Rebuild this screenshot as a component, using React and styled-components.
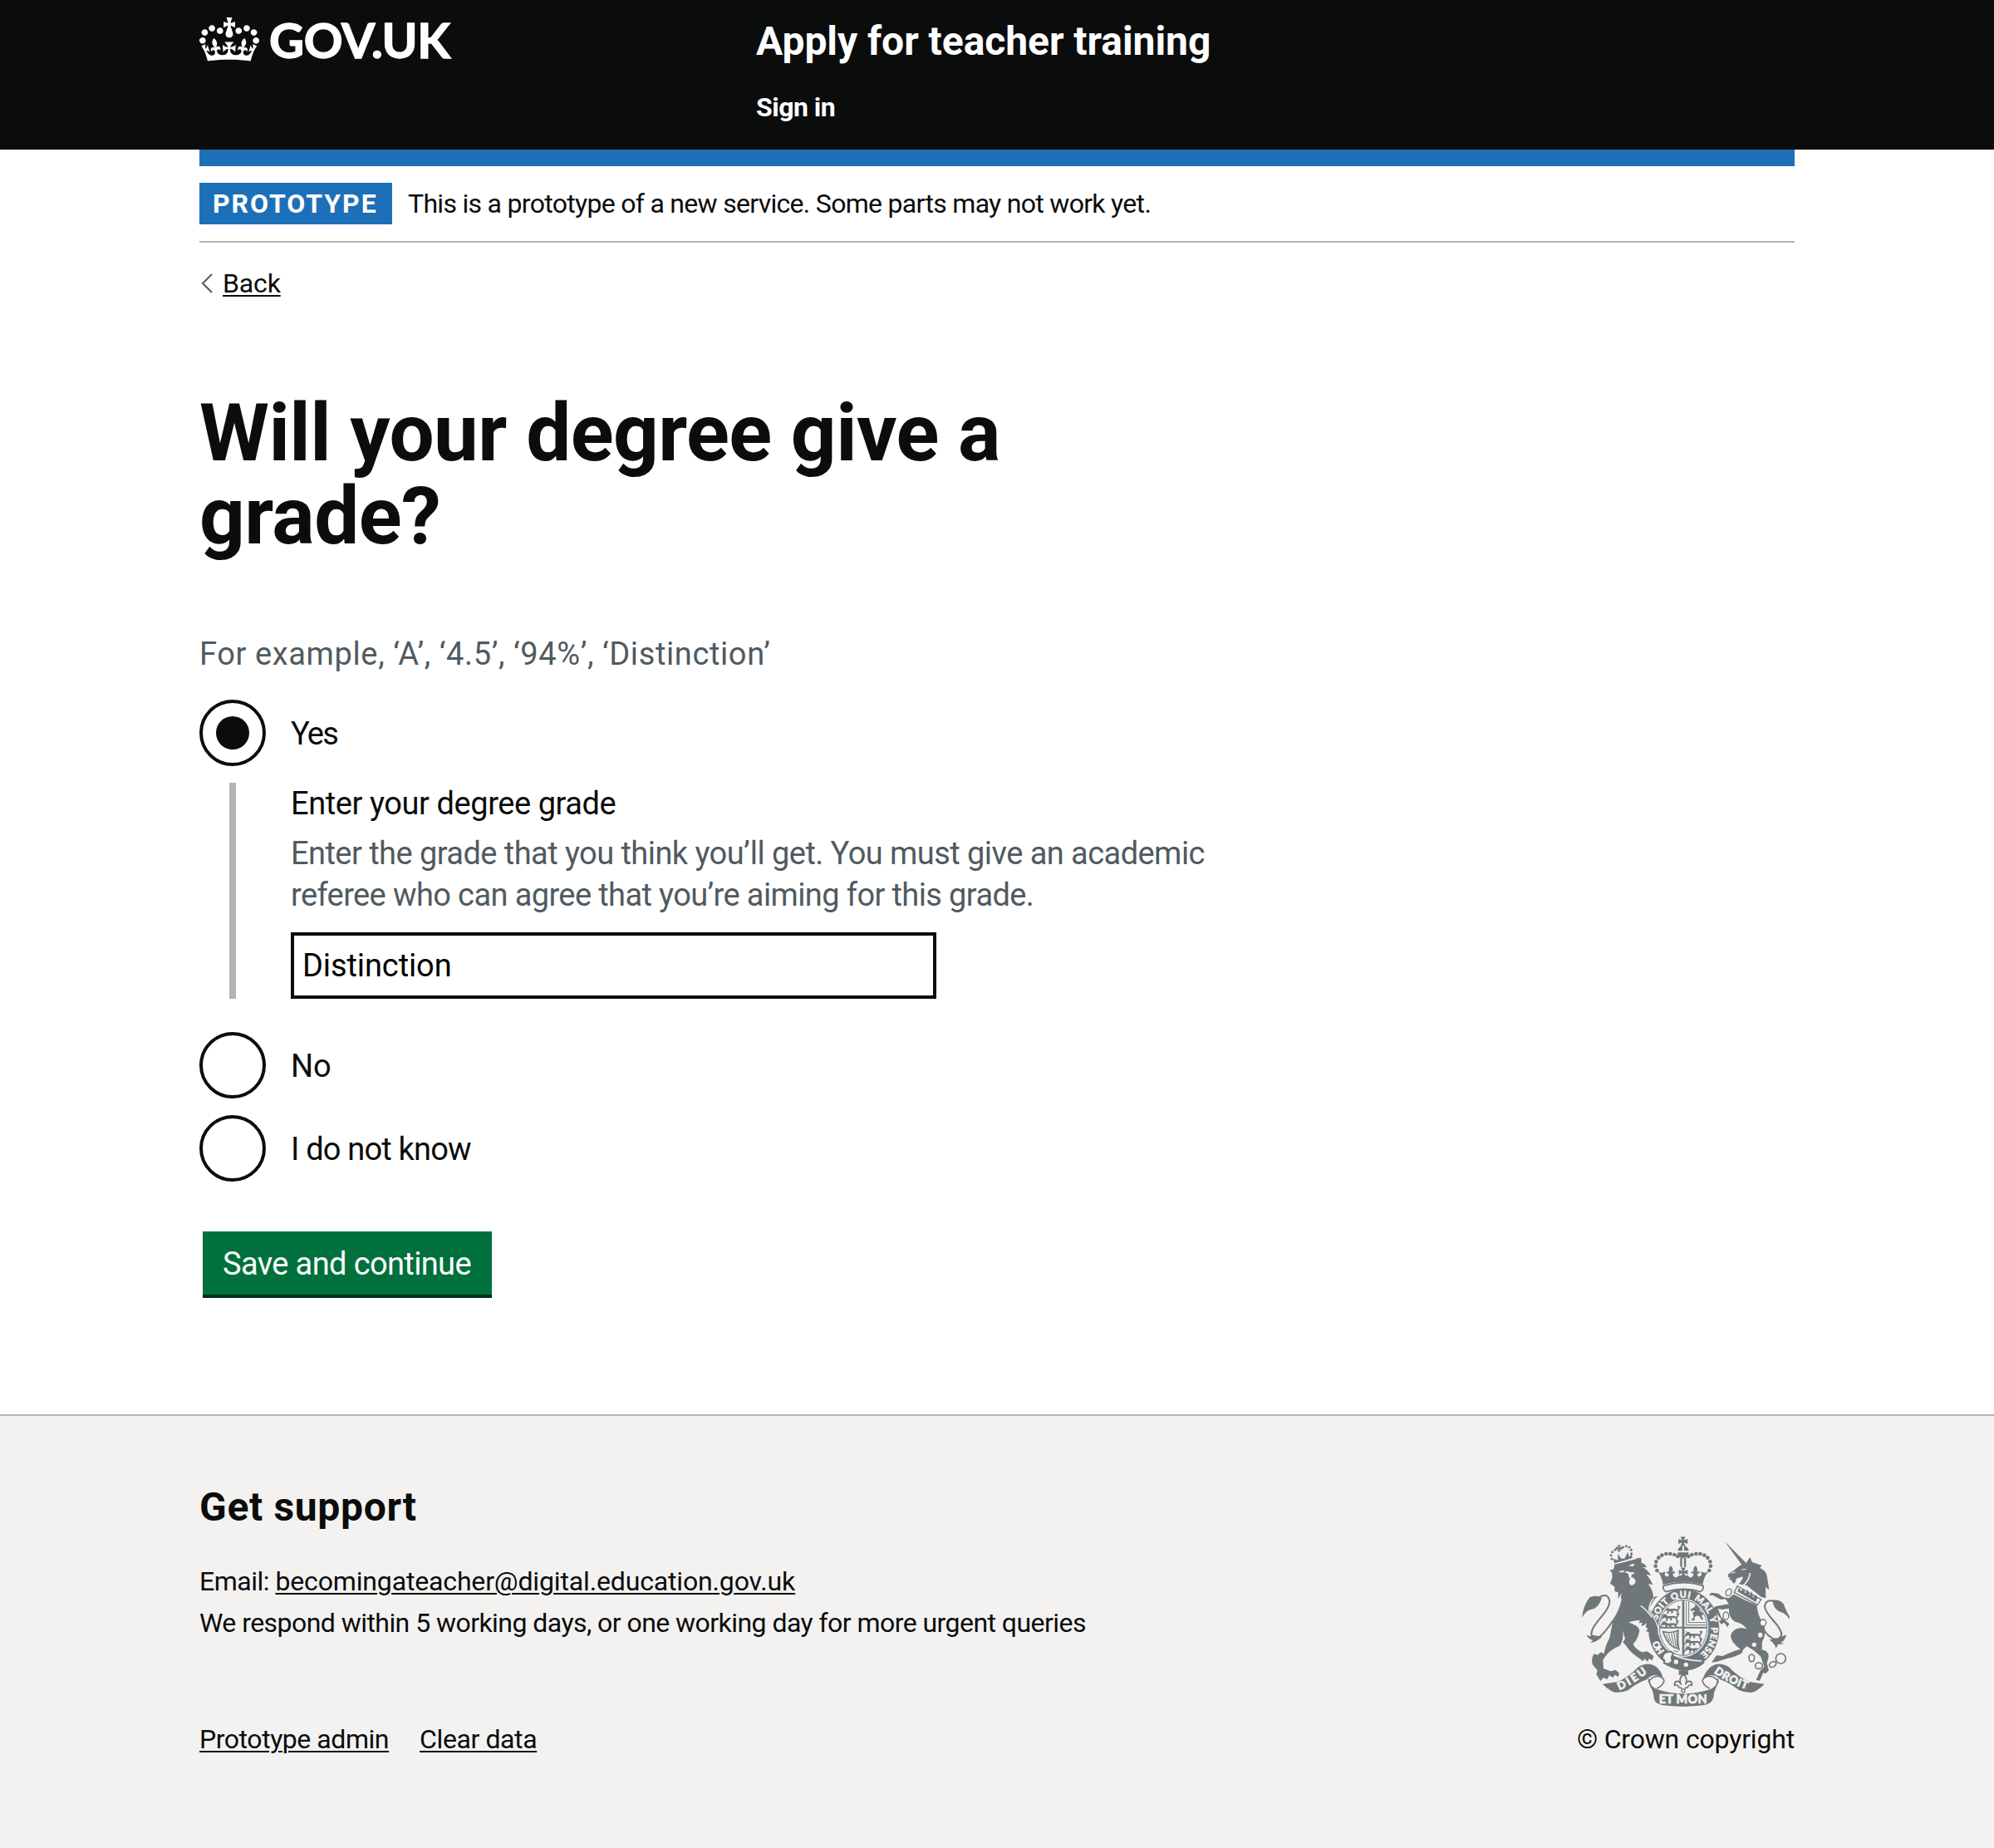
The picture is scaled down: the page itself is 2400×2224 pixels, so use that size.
import React, { useState } from "react";
import styled, { createGlobalStyle } from "styled-components";

const ink = "#0b0c0c";
const secondary = "#505a5f";
const rule = "#b1b4b6";
const blue = "#1d70b8";
const paper = "#f3f2f1";
const crest = "#6f777b";

const GlobalStyle = createGlobalStyle`
  body {
    margin: 0;
    background: #fff;
    color: ${ink};
    font-family: Roboto, "Liberation Sans", sans-serif;
    -webkit-font-smoothing: antialiased;
  }
  *, *::before, *::after { box-sizing: border-box; }
`;

const Page = styled.div`
  display: flex;
  flex-direction: column;
  min-height: 2224px;
`;

const Container = styled.div`
  width: 1920px;
  margin: 0 auto;
`;

/* Header */
const Header = styled.header`
  height: 180px;
  background: ${ink};
  color: #fff;
`;

const HeaderRow = styled(Container)`
  display: grid;
  grid-template-columns: 670px 1fr;
`;

const LogoLink = styled.a`
  display: flex;
  gap: 12px;
  padding-top: 21px;
  color: #fff;
  text-decoration: none;
`;

const LogoText = styled.span`
  margin-top: 2px;
  font: 700 58px/50px Lato, "Liberation Sans", sans-serif;
  letter-spacing: -0.3px;
  -webkit-text-stroke: 1.4px #fff;
`;

const ServiceColumn = styled.div`
  display: flex;
  flex-direction: column;
  align-items: flex-start;
  gap: 29px;
  padding-top: 20px;
`;

const ServiceName = styled.a`
  font-size: 48px;
  line-height: 60px;
  font-weight: 700;
  letter-spacing: -0.05px;
`;

const NavLink = styled.a`
  font-size: 32px;
  line-height: 40px;
  font-weight: 700;
  letter-spacing: -0.5px;
`;

/* Phase banner */
const PhaseBanner = styled(Container)`
  display: flex;
  gap: 19px;
  padding: 20px 0;
  border-top: 20px solid ${blue};
  border-bottom: 2px solid ${rule};
`;

const Tag = styled.strong`
  width: 232px;
  padding-left: 16px;
  background: ${blue};
  color: #fff;
  font-size: 32px;
  line-height: 50px;
  letter-spacing: 1.95px;
  white-space: nowrap;
`;

const Copy = styled.p`
  margin: 0;
  font-size: 32px;
  line-height: 50px;
  letter-spacing: ${(p) => p.$track || 0}px;
  white-space: nowrap;
`;

const Link = styled.a`
  color: ${ink};
  font-size: 32px;
  line-height: 50px;
  letter-spacing: ${(p) => p.$track || 0}px;
  text-decoration: underline;
  text-decoration-thickness: 2px;
  text-underline-offset: 3px;
`;

const BackRow = styled.div`
  display: flex;
  align-items: center;
  gap: 12px;
  margin-top: 24px;
  padding-left: 2px;
`;

/* Form */
const Main = styled.main`
  width: 1280px;
`;

const Heading = styled.h1`
  width: 1060px;
  margin: 105px 0 91px;
  font-size: 96px;
  line-height: 100px;
  font-weight: 700;
  letter-spacing: -0.55px;
`;

const Hint = styled.div`
  color: ${secondary};
  font-size: 38px;
  line-height: 50px;
  letter-spacing: ${(p) => p.$track || 0}px;
  white-space: nowrap;
`;

const Radios = styled.div`
  display: flex;
  flex-direction: column;
  gap: 20px;
  margin: 30px 0 60px;
`;

const RadioRow = styled.label`
  display: flex;
  align-items: center;
  gap: 30px;
  height: 80px;
`;

const RadioInput = styled.input`
  appearance: none;
  display: grid;
  place-items: center;
  width: 80px;
  height: 80px;
  margin: 0;
  border: 4px solid ${ink};
  border-radius: 50%;
  background: #fff;
  &:checked::before {
    content: "";
    width: 40px;
    height: 40px;
    border-radius: 50%;
    background: ${ink};
  }
`;

const RadioLabel = styled.span`
  padding-top: 2px;
  font-size: 38px;
  line-height: 50px;
  letter-spacing: ${(p) => p.$track || 0}px;
`;

const Conditional = styled.div`
  margin: 0 0 20px 36px;
  padding-left: 66px;
  border-left: 8px solid ${rule};
`;

const FieldLabel = styled.label`
  display: block;
  margin-bottom: 10px;
  font-size: 38px;
  line-height: 50px;
  letter-spacing: -0.42px;
`;

const TextInput = styled.input`
  display: block;
  width: 777px;
  height: 80px;
  margin: 20px 0 0;
  padding: 0 10px;
  border: 4px solid ${ink};
  border-radius: 0;
  background: #fff;
  color: #000;
  font: 38px/50px Roboto, "Liberation Sans", sans-serif;
  letter-spacing: -0.1px;
  outline: none;
`;

const Button = styled.button`
  display: block;
  width: 348px;
  height: 76px;
  margin: 0 0 144px 4px;
  padding: 2px 0 0 24px;
  border: 0;
  background: #00703c;
  box-shadow: 0 4px 0 #002d18;
  color: #fff;
  font: 38px/50px Roboto, "Liberation Sans", sans-serif;
  letter-spacing: -0.62px;
  text-align: left;
  white-space: nowrap;
`;

/* Footer */
const Footer = styled.footer`
  flex: 1;
  border-top: 2px solid ${rule};
  background: ${paper};
`;

const FooterRow = styled(Container)`
  display: flex;
  justify-content: space-between;
  align-items: flex-end;
  padding-top: 80px;
`;

const FooterHeading = styled.h2`
  margin: 0 0 34px;
  font-size: 48px;
  line-height: 60px;
  font-weight: 700;
  letter-spacing: 0.66px;
`;

const FooterLinks = styled.nav`
  display: flex;
  gap: 37px;
  margin-top: 90px;
`;

const Copyright = styled.div`
  display: flex;
  flex-direction: column;
  align-items: flex-end;
  gap: 14px;
`;

const CrestSvg = styled.svg`
  display: block;
  margin-right: 6px;
`;

function Crown() {
  return (
    <svg width="72" height="53" viewBox="0 0 132 97" aria-hidden="true">
      <path
        fill="currentColor"
        fillRule="evenodd"
        d="M25 30.2c3.5 1.5 7.7-.2 9.1-3.7 1.5-3.6-.2-7.8-3.9-9.2-3.6-1.4-7.6.3-9.1 3.9-1.4 3.5.3 7.5 3.9 9zM9 39.5c3.6 1.5 7.8-.2 9.2-3.7 1.5-3.6-.2-7.8-3.9-9.1-3.6-1.5-7.6.2-9.1 3.8-1.4 3.5.3 7.5 3.8 9zM4.4 57.2c3.5 1.5 7.7-.2 9.1-3.8 1.5-3.6-.2-7.7-3.9-9.1-3.5-1.5-7.6.3-9.1 3.8-1.4 3.5.3 7.6 3.9 9.1zm38.3-21.4c3.5 1.5 7.7-.2 9.1-3.8 1.5-3.6-.2-7.7-3.9-9.1-3.6-1.5-7.6.3-9.1 3.8-1.3 3.6.4 7.7 3.9 9.1zm64.4-5.6c-3.6 1.5-7.8-.2-9.1-3.7-1.5-3.6.2-7.8 3.8-9.2 3.6-1.4 7.7.3 9.2 3.9 1.3 3.5-.4 7.5-3.9 9zm15.9 9.3c-3.6 1.5-7.7-.2-9.1-3.7-1.5-3.6.2-7.8 3.7-9.1 3.6-1.5 7.7.2 9.2 3.8 1.5 3.5-.3 7.5-3.8 9zm4.7 17.7c-3.6 1.5-7.8-.2-9.2-3.8-1.5-3.6.2-7.7 3.9-9.1 3.6-1.5 7.7.3 9.2 3.8 1.3 3.5-.4 7.6-3.9 9.1zM89.3 35.8c-3.6 1.5-7.8-.2-9.2-3.8-1.4-3.6.2-7.7 3.9-9.1 3.6-1.5 7.7.3 9.2 3.8 1.4 3.6-.3 7.7-3.9 9.1zM69.7 17.7l8.9 4.7V9.3l-8.9 2.8c-.2-.3-.5-.6-.9-.9L72.4 0H59.6l3.5 11.2c-.3.3-.6.5-.9.9l-8.8-2.8v13.1l8.8-4.7c.3.3.6.7.9.9l-5 15.4v.1c-.2.8-.4 1.6-.4 2.4 0 4.1 3.1 7.5 7 8.1h.2c.3 0 .7.1 1 .1.4 0 .7 0 1-.1h.2c4-.6 7.1-4.1 7.1-8.1 0-.8-.1-1.7-.4-2.4V34l-5.1-15.4c.4-.2.7-.6 1-.9zM66 92.8c16.9 0 32.8 1.1 47.1 3.2 4-16.9 8.9-26.7 14-33.5l-9.6-3.4c1 4.9 1.1 7.2 0 10.2-1.5-1.4-3-4.3-4.2-8.7L108.6 76c2.8-2 5-3.2 7.5-3.3-4.4 9.4-10 11.9-13.6 11.2-4.3-.8-6.3-4.6-5.6-7.9 1-4.7 5.7-5.9 8-.5 4.3-8.7-3-11.4-7.6-8.8 7.1-7.2 7.9-13.5 2.1-21.1-8 6.1-8.1 12.3-4.5 20.8-4.7-5.4-12.1-2.5-9.5 6.2 3.4-5.2 7.9-2 7.2 3.1-.6 4.3-6.4 7.8-13.5 7.2-10.3-.9-10.9-8-11.2-13.8 2.5-.5 7.1 1.8 11 7.3L80.2 60c-4.1 4.4-8 5.3-12.3 5.4 1.4-4.4 8-11.6 8-11.6H55.5s6.4 7.2 7.9 11.6c-4.2-.1-8-1-12.3-5.4l1.4 16.4c3.9-5.5 8.5-7.7 10.9-7.3-.3 5.8-.9 12.8-11.1 13.8-7.2.6-12.9-2.9-13.5-7.2-.7-5 3.8-8.3 7.1-3.1 2.7-8.7-4.6-11.6-9.4-6.2 3.7-8.5 3.6-14.7-4.6-20.8-5.8 7.6-5 13.9 2.2 21.1-4.7-2.6-11.9.1-7.7 8.8 2.3-5.5 7.1-4.2 8.1.5.7 3.3-1.3 7.1-5.7 7.9-3.5.7-9-1.8-13.5-11.2 2.5.1 4.7 1.3 7.5 3.3l-4.7-15.4c-1.2 4.4-2.7 7.2-4.3 8.7-1.1-3-.9-5.3 0-10.2l-9.5 3.4c5 6.9 9.9 16.7 14 33.5 14.8-2.1 30.8-3.2 47.7-3.2z"
      />
    </svg>
  );
}

const crownPearls = [
  [343, 181], [338, 165], [340, 149], [349, 135],
  [361, 126], [376, 121], [391, 121], [406, 124], [418, 130],
];

const lionCrownPearls = [
  [180, 139], [177, 126], [182, 114], [192, 106], [220, 97], [232, 93], [243, 97], [250, 107], [251, 120],
];

/* word, centre along the garter in percent, drawn length */
const garterWords = [
  ["HO", 15.4, 46], ["SOIT", 35.6, 78], ["QUI", 48.4, 66], ["MAL", 61.2, 74], ["Y", 70.3, 20], ["PENSE", 82.2, 108],
];

/* One walking lion of the English quarters, about 70 units wide. */
function Passant({ x, y }) {
  return (
    <g transform={`translate(${x} ${y})`}>
      <path d="M0 4l8-5 7 4 5 4 22-1 8 3 3-6-4-5 6-3 4 6-3 9-4 4 4 8-8 2 2-5-7-6-10 1 2 7-9 2 2-6-5-3-6 5 2 5-8 1 3-9-5-4-8 3-6 6-3-3 6-6z" />
      <path d="M1 11l5 1M54 2l8-3M3-3l-4 3" stroke={crest} strokeWidth="2.5" />
    </g>
  );
}

function Fleur({ x, y, s = 1 }) {
  return (
    <path
      transform={`translate(${x} ${y}) scale(${s})`}
      d="M0-20c8 8 10 15 4 24 5-7 13-4 11 4-4-3-8 0-8 5l4 8h-22l4-8c0-5-4-8-8-5-2-8 6-11 11-4-6-9-4-16 4-24z"
    />
  );
}

function Pattee({ x, y, s = 1 }) {
  return (
    <path
      transform={`translate(${x} ${y}) scale(${s})`}
      d="M-9-17H9L3-4 17-9V9L3 4 9 17H-9L-3 4-17 9V-9L-3-4z"
    />
  );
}

function RoyalArms() {
  return (
    <CrestSvg width="250" height="205" viewBox="72 58 750 615" fill={crest} role="img">
      <defs>
        <path id="garter" d="M440 505A99 113 0 0 1 440 279A99 113 0 0 1 440 505" />
        <path id="motto-left" d="M207 613Q262 592 330 532" />
        <path id="motto-right" d="M548 550Q600 590 700 622" />
        <clipPath id="shield"><ellipse cx="438" cy="388" rx="84" ry="98" /></clipPath>
      </defs>

      {/* Garter and shield */}
      <ellipse cx="440" cy="392" rx="128" ry="144" />
      <ellipse cx="438" cy="388" rx="91" ry="105" fill={paper} />
      <g clipPath="url(#shield)">
        <path d="M434 280h8v220h-8zM350 384h176v6H350z" />
        <path d="M449 295V378H524M458 292V369H530" fill="none" stroke={crest} strokeWidth="3" />
        <Passant x={367} y={313} /><Passant x={363} y={339} /><Passant x={361} y={365} />
        <Passant x={447} y={403} /><Passant x={447} y={429} /><Passant x={447} y={455} />
        <path d="M466 361l10-12-4-16 9-5-9-4-4 7-4-10 14-7 5-12 12 4-3 7 9 3 3-8 3 9-11 7 8 8 15-1-3-6 6 6-1 6-12 2-5 7 6 9-5 5-9-14-9-2-7 5-2 13z" />
        <path d="M365 402Q392 410 420 398Q416 435 422 463Q385 460 365 402Z" fill="none" stroke={crest} strokeWidth="5" />
        <path d="M376 410l12 28M385 409l12 39M395 408l10 48M404 406l8 52M413 404l3 55M404 470Q422 480 425 462" fill="none" stroke={crest} strokeWidth="3" />
      </g>
      <ellipse cx="438" cy="388" rx="86" ry="100" fill="none" stroke={crest} strokeWidth="3" />
      <g fill={paper} stroke={paper} strokeWidth="1.6" fontFamily="Lato, Open Sans, sans-serif" fontWeight="900" fontSize="33">
        {garterWords.map(([word, at, length]) => (
          <text key={word} textAnchor="middle">
            <textPath href="#garter" startOffset={`${at}%`} textLength={length}>{word}</textPath>
          </text>
        ))}
      </g>

      {/* Belt and buckle */}
      <path d="M372 480Q430 510 504 507L516 514Q480 545 435 543Q395 535 365 516Z" />
      <path d="M392 478Q430 505 504 508" fill="none" stroke={paper} strokeWidth="5" />
      <path d="M368 482Q388 468 404 480Q390 492 398 508Q386 524 368 514Q376 506 362 498Z" fill={paper} stroke={crest} strokeWidth="5" />
      <circle cx="412" cy="511" r="8" fill={paper} />
      <circle cx="448" cy="521" r="8" fill={paper} />

      {/* Crown */}
      <path d="M366 236Q438 214 510 236Q512 250 500 258Q438 238 376 258Q362 250 366 236Z" fill={paper} stroke={crest} strokeWidth="5" />
      <path d="M345 184l14 6 14-5-2 14 14 6 14-5 12 7 14-9 12 3 14-3 13 9 12-7 14 5 14-6-2-14 14 5 14-6q-16 14-22 48-71-20-143 0-6-34-20-48z" />
      <Fleur x={393} y={184} /><Fleur x={482} y={184} /><Pattee x={438} y={187} s={0.95} />
      {crownPearls.map(([x, y]) => (
        <g key={`${x}-${y}`}>
          <circle cx={x} cy={y} r="7" /><circle cx={875 - x} cy={y} r="7" />
        </g>
      ))}
      <path d="M417 116a20 20 0 0 0 41 0zM418 110q2-14 17-18v18zM441 92q14 4 17 18h-17zM427 134h7v34h-7zM441 134h7v34h-7z" />
      <Pattee x={437} y={76} s={0.98} />

      {/* Lion */}
      <path d="M172 181L187 176 190 158Q226 152 260 138L286 135 287 154Q300 156 306 170L291 169Q312 180 321 199L304 195Q322 214 327 233L311 229Q328 250 330 277L346 274Q327 290 315 320Q334 345 344 374L347 408 337 400 338 417 326 406 318 415 315 403 303 401L310 392 302 384 306 370Q294 383 286 380L291 370 277 371 282 361 266 362 240 368Q275 380 280 396Q276 427 257 447Q266 466 290 476L308 473 331 490 326 506 314 499 310 511 298 499 293 509 279 498Q247 478 233 455L220 440 228 428 220 398Q224 428 210 452Q165 472 148 504L150 535 176 545 194 540 207 552 203 565 191 558 184 568 171 560 163 574 150 567 139 580 124 556 128 542 110 520Q105 497 116 482L128 486 141 476 152 482Q154 458 172 424Q180 385 184 358Q205 330 215 287Q210 275 218 258L203 283 203 260 190 256 190 240 174 228 182 205 180 188Z" />
      <path d="M204 188Q214 178 226 182L221 188ZM240 165Q252 156 262 156L258 166ZM226 187Q238 180 245 188Q262 184 262 192Q249 194 250 204Q266 208 266 222Q260 236 248 234Q238 226 246 210Q238 202 240 193Z" fill={paper} />
      <path d="M284 308Q308 325 324 350M332 280Q314 300 314 326Q334 350 347 385L350 414" fill="none" stroke={paper} strokeWidth="4" />
      <path d="M184 138L190 156 254 136 252 122 242 132 238 114 226 138 214 138 202 120 202 144Z" />
      <path d="M184 158L268 138" stroke={paper} strokeWidth="4" />
      {lionCrownPearls.map(([x, y]) => <circle key={`${x}-${y}`} cx={x} cy={y} r="4.6" />)}
      <Pattee x={206} y={101} s={0.68} />
      <path d="M132 280Q162 258 172 289C173 333 107 370 106 411Q112 433 138 419Q160 400 184 362" fill="none" stroke={crest} strokeWidth="6" />
      <path d="M72 352Q76 310 100 278Q122 268 144 280Q132 318 105 322Q86 326 72 352ZM88 413Q98 422 112 414L145 420Q128 438 102 442L112 433Q94 428 88 413Z" />

      {/* Unicorn */}
      <path d="M587 75L665 154 651 163Z" />
      <path d="M600 195L625 177 641 164 666 153 679 133 687 151 722 163 714 172Q738 182 740 200L748 250 735 242 736 281 720 277 668 236 638 230Q654 214 652 203L628 211Q632 220 620 229L611 216 602 211 610 205 600 206Z" />
      <path d="M612 190L626 187M648 180Q656 174 665 177" stroke={paper} strokeWidth="3" fill="none" />
      <path d="M679 190Q678 216 650 240M640 212l12-4" fill="none" stroke={paper} strokeWidth="5" />
      <path d="M633 237L622 261 706 305 719 286Z" fill={paper} stroke={crest} strokeWidth="4" />
      <path d="M634 257l4-14 9 12 9-9 6 18 9-13 6 20 9-14 4 22 11-11 4 15-5 12z" />
      <path d="M620 267Q664 291 704 306Q704 340 729 376Q740 408 723 438L722 467Q746 471 746 493L740 516 747 542 735 554 727 550 714 579 701 576 716 543 730 529 718 492 692 469 668 455Q650 467 651 478Q632 492 595 499L560 510 540 513 558 488 580 490Q620 470 644 465Q612 442 609 418Q612 392 648 388L668 392Q650 370 625 366Q600 350 603 318L578 322 563 319 575 350 604 373 598 386 586 369 574 375 568 364 576 358 553 330 547 341 542 322 554 311 603 302 590 284 573 286 546 271 531 271 539 261 564 264 580 276 602 281Z" />
      <g fill={paper}>
        <ellipse cx="716" cy="414" rx="8" ry="9" /><circle cx="694" cy="449" r="8" />
        <ellipse cx="592" cy="345" rx="10" ry="14" stroke={crest} strokeWidth="4" />
        <ellipse cx="602" cy="260" rx="10" ry="13" transform="rotate(30 602 260)" stroke={crest} strokeWidth="4" />
        <ellipse cx="726" cy="370" rx="11" ry="12" stroke={crest} strokeWidth="4" />
      </g>
      <g fill="none" stroke={crest} strokeWidth="5">
        <ellipse cx="685" cy="497" rx="10" ry="13" />
        <ellipse cx="711" cy="525" rx="13" ry="11" />
        <ellipse cx="761" cy="520" rx="13" ry="9" transform="rotate(-30 761 520)" />
        <circle cx="790" cy="499" r="18" />
        <path d="M766 292Q736 283 732 312C739 350 785 371 793 409Q789 437 762 427Q739 414 728 394" strokeWidth="6" />
      </g>
      <path d="M760 288Q786 284 800 302Q806 319 822 349L822 358Q808 335 789 331Q764 322 760 288ZM749 431L783 424 810 413Q807 434 790 442L804 445 780 448 773 462Q768 445 749 431Z" />

      {/* Motto ribbon */}
      <path d="M147 591L200 583Q240 567 276 529Q312 507 342 530Q364 552 363 570Q334 546 307 574Q270 588 239 613Q205 627 183 618Q164 609 147 591Z" />
      <path d="M731 591L678 583Q638 567 602 529Q566 507 536 530Q514 552 510 570Q544 546 571 574Q608 588 639 613Q673 627 695 618Q714 609 731 591Z" />
      <path d="M313 572Q316 594 330 613M312 585C334 549 372 563 368 583Q361 600 342 607M563 572Q562 594 548 613M566 585C544 549 504 563 508 583Q515 600 534 607" fill="none" stroke={crest} strokeWidth="5" />
      <path d="M310 580Q323 600 341 609Q440 642 537 609Q555 600 568 580Q548 613 547 640Q541 663 512 667Q438 677 361 667Q332 660 332 641Q330 612 310 580Z" />
      <path d="M422 542h34v16h-34z" />
      <path
        d="M438 556C424 568 424 580 430 592C422 574 404 580 407 596C414 592 422 596 422 604H430L438 620L446 604H454C454 596 462 592 469 596C472 580 454 574 446 592C452 580 452 568 438 556Z"
        fill={paper}
        stroke={crest}
        strokeWidth="5"
        strokeLinejoin="round"
      />
      <circle cx="438" cy="615" r="6" fill={paper} stroke={crest} strokeWidth="4" />
      <g fill={paper} stroke={paper} strokeWidth="2" fontFamily="Lato, Open Sans, sans-serif" fontWeight="900" fontSize="40">
        <text><textPath href="#motto-left" textLength="120">DIEU</textPath></text>
        <text><textPath href="#motto-right" textLength="133">DROIT</textPath></text>
        <text x="437" y="661" fontSize="43" textAnchor="middle" textLength="174">ET MON</text>
      </g>
    </CrestSvg>
  );
}

const Choice = ({ value, label, track, selected, onSelect }) => (
  <RadioRow>
    <RadioInput type="radio" name="grade" checked={selected === value} onChange={() => onSelect(value)} />
    <RadioLabel $track={track}>{label}</RadioLabel>
  </RadioRow>
);

export default function App() {
  const [choice, setChoice] = useState("yes");
  const [grade, setGrade] = useState("Distinction");
  const radio = { selected: choice, onSelect: setChoice };

  return (
    <Page>
      <GlobalStyle />
      <Header>
        <HeaderRow>
          <LogoLink>
            <Crown />
            <LogoText>GOV.UK</LogoText>
          </LogoLink>
          <ServiceColumn>
            <ServiceName>Apply for teacher training</ServiceName>
            <NavLink>Sign in</NavLink>
          </ServiceColumn>
        </HeaderRow>
      </Header>

      <PhaseBanner>
        <Tag>PROTOTYPE</Tag>
        <Copy $track={-0.7}>This is a prototype of a new service. Some parts may not work yet.</Copy>
      </PhaseBanner>

      <Container>
        <BackRow>
          <svg width="14" height="24" viewBox="0 0 14 24" fill="none" stroke={secondary} strokeWidth="2">
            <path d="M13 1L2 12L13 23" />
          </svg>
          <Link $track={-0.15}>Back</Link>
        </BackRow>

        <Main>
          <Heading>Will your degree give a grade?</Heading>
          <Hint $track={0.62}>For example, ‘A’, ‘4.5’, ‘94%’, ‘Distinction’</Hint>
          <Radios>
            <Choice {...radio} value="yes" label="Yes" track={-1.8} />
            {choice === "yes" && (
              <Conditional>
                <FieldLabel htmlFor="degree-grade">Enter your degree grade</FieldLabel>
                <Hint $track={-0.55}>Enter the grade that you think you’ll get. You must give an academic</Hint>
                <Hint $track={-0.61}>referee who can agree that you’re aiming for this grade.</Hint>
                <TextInput id="degree-grade" value={grade} onChange={(e) => setGrade(e.target.value)} />
              </Conditional>
            )}
            <Choice {...radio} value="no" label="No" track={-0.2} />
            <Choice {...radio} value="unknown" label="I do not know" track={-0.8} />
          </Radios>
          <Button>Save and continue</Button>
        </Main>
      </Container>

      <Footer>
        <FooterRow>
          <div>
            <FooterHeading>Get support</FooterHeading>
            <Copy $track={-0.5}>
              Email: <Link $track={-0.15}>becomingateacher@digital.education.gov.uk</Link>
            </Copy>
            <Copy $track={-0.55}>We respond within 5 working days, or one working day for more urgent queries</Copy>
            <FooterLinks>
              <Link $track={-0.45}>Prototype admin</Link>
              <Link $track={-0.4}>Clear data</Link>
            </FooterLinks>
          </div>
          <Copyright>
            <RoyalArms />
            <Copy $track={-0.17}>© Crown copyright</Copy>
          </Copyright>
        </FooterRow>
      </Footer>
    </Page>
  );
}
